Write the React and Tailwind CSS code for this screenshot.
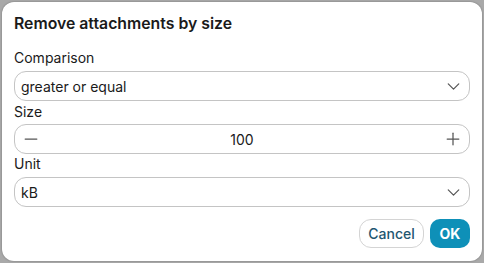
import { ChevronDown, Minus, Plus } from 'lucide-react'

function Label({ children, className = '' }) {
  return <div className={`text-[14px] leading-[17px] text-[#1a1a1a] ${className}`}>{children}</div>
}

function Select({ value }) {
  return (
    <div className="h-[30px] flex items-center justify-between pl-[6px] pr-[5px] border border-[#c4c4c4] rounded-[12px] bg-white text-[14px] text-[#1a1a1a]">
      <span>{value}</span>
      <ChevronDown size={21} strokeWidth={1.4} className="text-[#555]" />
    </div>
  )
}

export default function App() {
  return (
    <div className="w-[484px] h-[263px] bg-[#a9a9a9] p-[2px]" style={{ fontFamily: 'Inter, "Noto Sans", sans-serif' }}>
      <div className="h-full bg-white rounded-[12px] shadow-[0_0_2px_rgba(0,0,0,0.35)] px-[12px] pt-[12px] flex flex-col">
        <h2 className="text-[15.8px] leading-[20px] font-semibold text-[#1a1a1a] mb-[15px]">Remove attachments by size</h2>
        <Label className="mb-[5px]">Comparison</Label>
        <Select value="greater or equal" />
        <Label className="mt-[2px] mb-[4px]">Size</Label>
        <div className="h-[30px] flex items-center justify-between px-[6px] border border-[#c4c4c4] rounded-[12px] bg-white text-[14px] text-[#1a1a1a]">
          <Minus size={20} strokeWidth={1.5} className="text-[#555]" />
          <span>100</span>
          <Plus size={20} strokeWidth={1.5} className="text-[#555]" />
        </div>
        <Label className="mt-[1px] mb-[5px]">Unit</Label>
        <Select value="kB" />
        <div className="flex justify-end gap-[6px] mt-[12px]">
          <button className="h-[29px] w-[65px] border border-[#d4d4d4] rounded-[12px] text-[14px] font-medium text-[#1e5670] bg-white">Cancel</button>
          <button className="h-[29px] w-[40px] rounded-[10px] text-[14px] font-bold text-white bg-[#0e90b8]">OK</button>
        </div>
      </div>
    </div>
  )
}
